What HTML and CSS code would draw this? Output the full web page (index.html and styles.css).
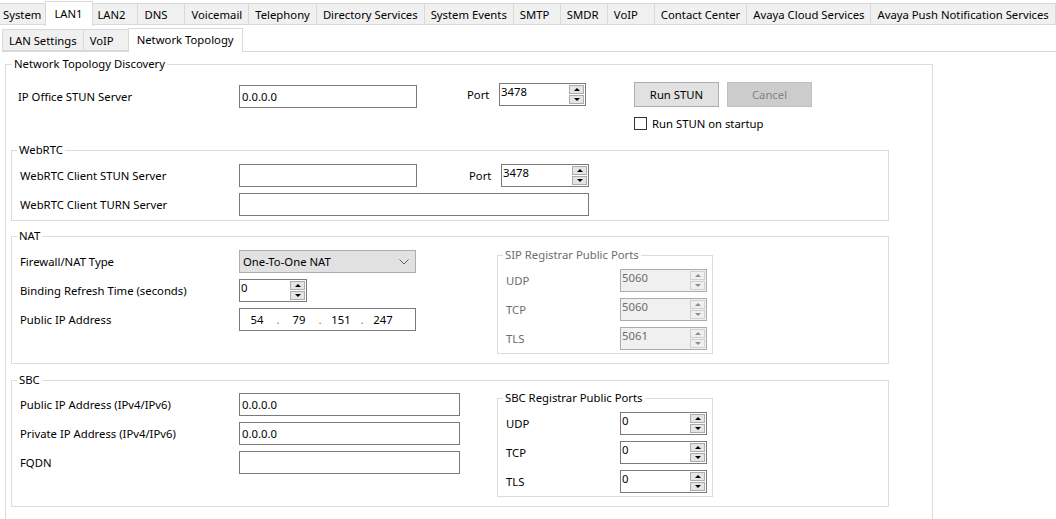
FILE: index.html
```html
<!DOCTYPE html>
<html lang="en">
<head>
  <meta charset="UTF-8">
  <meta name="viewport" content="width=device-width, initial-scale=1.0">
  <title>LAN1 - Network Topology</title>
  <link rel="stylesheet" href="styles.css">
</head>
<body>
  <div class="tabs tabs-main">
    <div class="tab">System</div>
    <div class="tab active">LAN1</div>
    <div class="tab">LAN2</div>
    <div class="tab">DNS</div>
    <div class="tab">Voicemail</div>
    <div class="tab">Telephony</div>
    <div class="tab">Directory Services</div>
    <div class="tab">System Events</div>
    <div class="tab">SMTP</div>
    <div class="tab">SMDR</div>
    <div class="tab">VoIP</div>
    <div class="tab">Contact Center</div>
    <div class="tab">Avaya Cloud Services</div>
    <div class="tab">Avaya Push Notification Services</div>
  </div>
  <div class="tabs tabs-sub">
    <div class="tab">LAN Settings</div>
    <div class="tab">VoIP</div>
    <div class="tab active">Network Topology</div>
  </div>

  <div class="page">
    <fieldset class="group outer">
      <legend>Network Topology Discovery</legend>

      <div class="stun-row">
        <div class="lbl lbl-first">IP Office STUN Server</div>
        <div class="text stun-input">0.0.0.0</div>
        <div class="lbl port-lbl">Port</div>
        <div class="spin port-spin">
          <span class="val">3478</span>
          <span class="arrows"><i class="up"></i><i class="down"></i></span>
        </div>
        <div class="stun-actions">
          <div class="btn-row">
            <div class="btn">Run STUN</div>
            <div class="btn disabled">Cancel</div>
          </div>
          <div class="check-row">
            <span class="checkbox"></span>
            <span>Run STUN on startup</span>
          </div>
        </div>
      </div>

      <fieldset class="group inner webrtc">
        <legend>WebRTC</legend>
        <div class="row">
          <div class="lbl">WebRTC Client STUN Server</div>
          <div class="text w178"></div>
          <div class="lbl port-lbl2">Port</div>
          <div class="spin w88">
            <span class="val">3478</span>
            <span class="arrows"><i class="up"></i><i class="down"></i></span>
          </div>
        </div>
        <div class="row">
          <div class="lbl">WebRTC Client TURN Server</div>
          <div class="text w350"></div>
        </div>
      </fieldset>

      <fieldset class="group inner nat">
        <legend>NAT</legend>
        <div class="split">
          <div class="rows">
            <div class="row">
              <div class="lbl">Firewall/NAT Type</div>
              <div class="select">
                <span>One-To-One NAT</span>
                <svg width="10" height="6" viewBox="0 0 10 6"><polyline points="0.5,0.5 5,5 9.5,0.5" fill="none" stroke="#606060" stroke-width="1"/></svg>
              </div>
            </div>
            <div class="row">
              <div class="lbl">Binding Refresh Time (seconds)</div>
              <div class="spin w68">
                <span class="val">0</span>
                <span class="arrows"><i class="up"></i><i class="down"></i></span>
              </div>
            </div>
            <div class="row">
              <div class="lbl">Public IP Address</div>
              <div class="text ip">
                <span class="oct">54</span><span class="dot">.</span>
                <span class="oct">79</span><span class="dot">.</span>
                <span class="oct">151</span><span class="dot">.</span>
                <span class="oct">247</span>
              </div>
            </div>
          </div>

          <fieldset class="group ports disabled-group sip">
            <legend>SIP Registrar Public Ports</legend>
            <div class="row">
              <div class="lbl port-name">UDP</div>
              <div class="spin w87 off">
                <span class="val">5060</span>
                <span class="arrows"><i class="up"></i><i class="down"></i></span>
              </div>
            </div>
            <div class="row">
              <div class="lbl port-name">TCP</div>
              <div class="spin w87 off">
                <span class="val">5060</span>
                <span class="arrows"><i class="up"></i><i class="down"></i></span>
              </div>
            </div>
            <div class="row">
              <div class="lbl port-name">TLS</div>
              <div class="spin w87 off">
                <span class="val">5061</span>
                <span class="arrows"><i class="up"></i><i class="down"></i></span>
              </div>
            </div>
          </fieldset>
        </div>
      </fieldset>

      <fieldset class="group inner sbc">
        <legend>SBC</legend>
        <div class="split">
          <div class="rows">
            <div class="row">
              <div class="lbl">Public IP Address (IPv4/IPv6)</div>
              <div class="text w221">0.0.0.0</div>
            </div>
            <div class="row">
              <div class="lbl">Private IP Address (IPv4/IPv6)</div>
              <div class="text w221">0.0.0.0</div>
            </div>
            <div class="row">
              <div class="lbl">FQDN</div>
              <div class="text w221"></div>
            </div>
          </div>

          <fieldset class="group ports sbc-ports">
            <legend>SBC Registrar Public Ports</legend>
            <div class="row">
              <div class="lbl port-name">UDP</div>
              <div class="spin w87">
                <span class="val">0</span>
                <span class="arrows"><i class="up"></i><i class="down"></i></span>
              </div>
            </div>
            <div class="row">
              <div class="lbl port-name">TCP</div>
              <div class="spin w87">
                <span class="val">0</span>
                <span class="arrows"><i class="up"></i><i class="down"></i></span>
              </div>
            </div>
            <div class="row">
              <div class="lbl port-name">TLS</div>
              <div class="spin w87">
                <span class="val">0</span>
                <span class="arrows"><i class="up"></i><i class="down"></i></span>
              </div>
            </div>
          </fieldset>
        </div>
      </fieldset>
    </fieldset>
  </div>
</body>
</html>
```

FILE: styles.css
```css
* {
  box-sizing: border-box;
}
html, body {
  margin: 0;
  height: 100%;
  overflow: hidden;
}
body {
  font-family: 'Noto Sans', sans-serif;
  font-size: 11.3px;
  color: #000;
  background: #fff;
}

/* tab strips */
.tabs {
  display: flex;
  align-items: flex-end;
}
.tabs-main {
  height: 25px;
  margin-left: -4px;
}
.tabs-sub {
  height: 27px;
  border-bottom: 1px solid #d9d9d9;
  margin-left: 2px;
}
.tab {
  height: 22px;
  min-width: 48px;
  padding: 0 6px;
  line-height: 21px;
  white-space: nowrap;
  background: #f0f0f0;
  border: 1px solid #d9d9d9;
  margin-right: -1px;
}
.tabs-main .tab {
  line-height: 22px;
}
.tab.active {
  position: relative;
  z-index: 1;
  height: 25px;
  margin: 0 -3px -1px -2px;
  padding: 0 8px;
  background: #fff;
  border-bottom: none;
}
.tabs-main .tab.active {
  line-height: 23px;
}
.tabs-sub .tab.active {
  height: 24px;
  line-height: 21px;
}

/* group boxes */
.page {
  padding: 4px 0 0 5px;
}
.group {
  margin: 0;
  min-width: 0;
  border: 1px solid #dcdcdc;
  padding: 0 0 0 8px;
}
.group legend {
  padding: 0 2px;
  margin-left: -3px;
  line-height: 16px;
}
.outer {
  width: 928px;
  height: 500px;
  padding-left: 5px;
}
.outer > legend {
  margin-left: 1px;
}
.inner {
  width: 878px;
}
.webrtc {
  margin-top: 12px;
  padding-top: 6px;
  padding-bottom: 4px;
}
.nat {
  margin-top: 7px;
  padding-bottom: 9px;
}
.sbc {
  margin-top: 8px;
  padding-bottom: 9px;
}

.row {
  display: flex;
  align-items: flex-start;
  height: 23px;
  margin-bottom: 6px;
}
.row:last-child {
  margin-bottom: 0;
}
.lbl {
  width: 219px;
  line-height: 24px;
  white-space: nowrap;
}

.split {
  display: grid;
  grid-template-columns: 477px 216px;
  align-items: start;
}
.nat .rows {
  padding-top: 6px;
}
.sbc .rows {
  padding-top: 5px;
}
.ports {
  width: 216px;
  padding-top: 6px;
  padding-bottom: 3px;
}
.sip {
  margin-top: 3px;
}
.sbc-ports {
  margin-top: 2px;
}
.port-name {
  width: 114px;
}
.disabled-group,
.disabled-group legend {
  color: #6d6d6d;
}

/* first row */
.stun-row {
  display: flex;
  align-items: flex-start;
  margin-left: 7px;
  padding-top: 10px;
}
.lbl-first {
  width: 221px;
  margin-top: 3px;
}
.stun-input {
  width: 178px;
  margin-top: 3px;
}
.port-lbl {
  width: 32px;
  margin-left: 50px;
  margin-top: 1px;
}
.port-spin {
  width: 87px;
  margin-top: 1px;
}
.port-lbl2 {
  width: 32px;
  margin-left: 52px;
}
.stun-actions {
  margin-left: 48px;
}
.btn-row {
  display: flex;
  gap: 8px;
}
.btn {
  width: 85px;
  height: 25px;
  line-height: 23px;
  text-align: center;
  background: #e1e1e1;
  border: 1px solid #adadad;
}
.btn.disabled {
  background: #cccccc;
  border-color: #bfbfbf;
  color: #838383;
}
.check-row {
  display: flex;
  align-items: center;
  gap: 5px;
  margin-top: 10px;
  height: 13px;
}
.checkbox {
  width: 13px;
  height: 13px;
  border: 1px solid #333;
  background: #fff;
}

/* fields */
.text {
  height: 23px;
  border: 1px solid #7a7a7a;
  background: #fff;
  padding: 0 2px;
  line-height: 21px;
  white-space: nowrap;
}
.w178 { width: 178px; }
.w350 { width: 350px; }
.w221 { width: 221px; }
.w87 { width: 87px; }
.w88 { width: 88px; }
.w68 { width: 68px; }

.ip {
  width: 177px;
  display: flex;
  padding-left: 2px;
}
.ip .oct {
  width: 30px;
  text-align: center;
}
.ip .dot {
  width: 12px;
  text-align: center;
  color: #7a7a7a;
}

.select {
  width: 177px;
  height: 23px;
  display: flex;
  align-items: center;
  justify-content: space-between;
  padding: 0 6px 0 3px;
  background: #e1e1e1;
  border: 1px solid #adadad;
}

.spin {
  height: 23px;
  display: flex;
  justify-content: space-between;
  border: 1px solid #7a7a7a;
  background: #fff;
  padding: 0 1px 0 1px;
}
.spin .val {
  line-height: 16px;
}
.spin .arrows {
  display: flex;
  flex-direction: column;
  gap: 1px;
  width: 15px;
  padding-top: 1px;
}
.spin .arrows i {
  height: 9px;
  background: #e5e5e5;
  border: 1px solid #acacac;
  display: flex;
  align-items: center;
  justify-content: center;
}
.spin .arrows i::after {
  content: '';
  border-left: 3px solid transparent;
  border-right: 3px solid transparent;
}
.spin .arrows .up::after {
  border-bottom: 3px solid #000;
}
.spin .arrows .down::after {
  border-top: 3px solid #000;
}
.spin.off {
  background: #f0f0f0;
  border-color: #acacac;
  color: #6d6d6d;
}
.spin.off .arrows i {
  background: #f0f0f0;
  border-color: #d0d0d0;
}
.spin.off .arrows .up::after {
  border-bottom-color: #8c8c8c;
}
.spin.off .arrows .down::after {
  border-top-color: #8c8c8c;
}
```
